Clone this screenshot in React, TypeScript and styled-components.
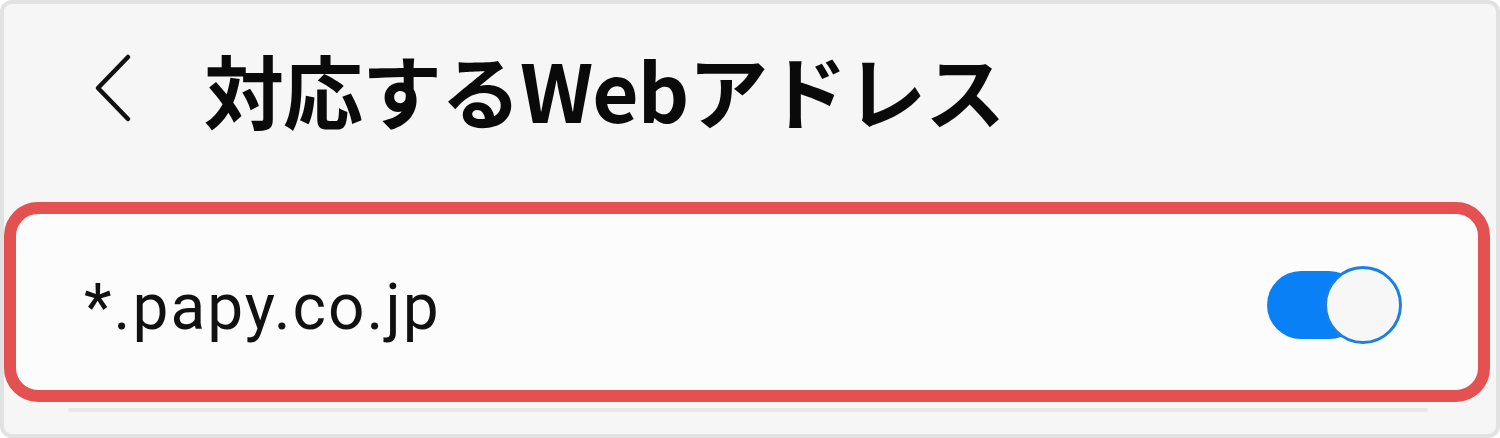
import styled, { createGlobalStyle } from "styled-components"

const GlobalStyle = createGlobalStyle`
  html, body {
    margin: 0;
    padding: 0;
    background: #ffffff;
  }
  * {
    box-sizing: border-box;
  }
`

const Frame = styled.div`
  width: 1500px;
  height: 438px;
  border: 4px solid #e2e2e2;
  border-radius: 12px;
  background: #f6f6f6;
  display: flex;
  flex-direction: column;
  overflow: hidden;
`

const Header = styled.header`
  height: 198px;
  display: flex;
  align-items: center;
  padding: 0 0 30px 86px;
`

const BackButton = styled.button`
  width: 48px;
  height: 72px;
  border: none;
  background: none;
  padding: 0;
  display: flex;
  align-items: center;
  justify-content: center;
  margin-right: 66px;
`

const Title = styled.h1`
  margin: 0;
  font-family: "Noto Sans CJK JP", "Noto Sans", sans-serif;
  font-weight: 700;
  font-size: 80px;
  line-height: 1;
  letter-spacing: -1px;
  color: #0a0a0a;
`

const Highlight = styled.section`
  height: 200px;
  margin-right: 6px;
  border: 12px solid #e35151;
  border-radius: 34px;
  background: #fcfcfc;
  display: flex;
  align-items: center;
  justify-content: space-between;
  padding: 10px 77px 0 68px;
`

const Address = styled.span`
  font-family: Roboto, "Noto Sans", sans-serif;
  font-size: 64px;
  letter-spacing: 2px;
  color: #111111;
`

const Switch = styled.div`
  position: relative;
  width: 134px;
  height: 80px;
  margin-top: -4px;
  display: flex;
  align-items: center;
`

const Track = styled.div<{ $on: boolean }>`
  width: 96px;
  height: 68px;
  border-radius: 34px;
  background: ${p => (p.$on ? "#0a80f6" : "#c9c9c9")};
`

const Thumb = styled.div<{ $on: boolean }>`
  position: absolute;
  top: 1px;
  left: ${p => (p.$on ? "57px" : "0")};
  width: 78px;
  height: 78px;
  border-radius: 50%;
  border: 3px solid #1c80e2;
  background: #f7f7f7;
`

const Divider = styled.div`
  height: 4px;
  margin: 6px 68px 0 64px;
  background: #e8e8e8;
  border-radius: 2px;
`

function Chevron() {
  return (
    <svg width="48" height="72" viewBox="0 0 48 72">
      <path d="M38 5 L8 36 L38 67" fill="none" stroke="#111" strokeWidth="4.5" strokeLinecap="round" strokeLinejoin="round" />
    </svg>
  )
}

export default function App() {
  const on = true
  return (
    <>
      <GlobalStyle />
      <Frame>
        <Header>
          <BackButton aria-label="戻る">
            <Chevron />
          </BackButton>
          <Title>対応するWebアドレス</Title>
        </Header>
        <Highlight>
          <Address>*.papy.co.jp</Address>
          <Switch>
            <Track $on={on} />
            <Thumb $on={on} />
          </Switch>
        </Highlight>
        <Divider />
      </Frame>
    </>
  )
}
